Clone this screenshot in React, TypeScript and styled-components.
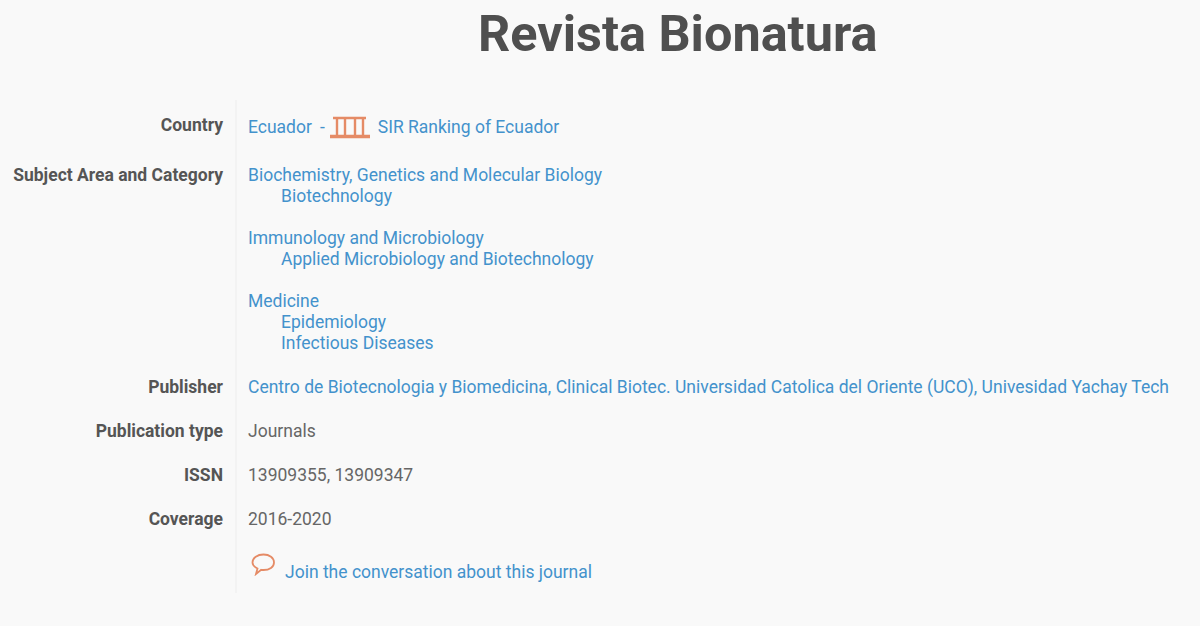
import React from 'react';
import styled, { createGlobalStyle } from 'styled-components';

const GlobalStyle = createGlobalStyle`
  html, body {
    margin: 0;
    padding: 0;
    background: #f9f9f9;
    overflow: hidden;
  }
`;

const Page = styled.div`
  width: 1200px;
  height: 626px;
  background: #f9f9f9;
  font-family: Roboto, sans-serif;
  font-size: 17.5px;
  line-height: 21px;
  color: #666;
`;

const Title = styled.h1`
  margin: 0;
  padding: 6px 0 0 478px;
  height: 95px;
  box-sizing: border-box;
  font-size: 50.4px;
  line-height: 56px;
  font-weight: 700;
  color: #4f4f4f;
`;

const InfoGrid = styled.div`
  display: grid;
  grid-template-columns: 235px 1fr;
  padding-top: 5px;
`;

const Label = styled.div<{ $top: number; $bottom: number }>`
  padding: ${p => p.$top}px 12px ${p => p.$bottom}px 0;
  text-align: right;
  font-weight: 700;
  color: #555;
`;

const Value = styled.div<{ $top: number; $bottom: number }>`
  padding: ${p => p.$top}px 0 ${p => p.$bottom}px 11px;
  border-left: 2px solid #f3f3f3;
  white-space: nowrap;
`;

const Link = styled.a`
  color: #4392cc;
  text-decoration: none;
`;

const SubLink = styled(Link)`
  display: block;
  padding-left: 33px;
`;

const Category = styled.div`
  margin-bottom: 21px;

  &:last-child {
    margin-bottom: 0;
  }
`;

const Dash = styled.span`
  color: #4392cc;
  margin: 0 5px 0 8px;
`;

const RankIcon = styled.svg`
  vertical-align: -6px;
  margin-right: 8px;
`;

const ChatIcon = styled.svg`
  vertical-align: 2px;
  margin: 0 8px 0 3px;
`;

const categories = [
  { name: 'Biochemistry, Genetics and Molecular Biology', subs: ['Biotechnology'] },
  { name: 'Immunology and Microbiology', subs: ['Applied Microbiology and Biotechnology'] },
  { name: 'Medicine', subs: ['Epidemiology', 'Infectious Diseases'] },
];

export default function App() {
  return (
    <Page>
      <GlobalStyle />
      <Title>Revista Bionatura</Title>
      <InfoGrid>
        <Label $top={15} $bottom={26}>Country</Label>
        <Value $top={15} $bottom={26}>
          <Link>Ecuador</Link>
          <Dash>-</Dash>
          <RankIcon width="40" height="24" viewBox="0 0 40 24" fill="none" stroke="#e58b66">
            <path d="M3 3h33" strokeWidth="2.4" />
            <path d="M7 3v18M15 3v18M25 3v18M33 3v18" strokeWidth="2.4" />
            <path d="M0 21.500h40" strokeWidth="3.4" />
          </RankIcon>
          <Link>SIR Ranking of Ecuador</Link>
        </Value>

        <Label $top={0} $bottom={12}>Subject Area and Category</Label>
        <Value $top={0} $bottom={12}>
          {categories.map(c => (
            <Category key={c.name}>
              <Link>{c.name}</Link>
              {c.subs.map(s => <SubLink key={s}>{s}</SubLink>)}
            </Category>
          ))}
        </Value>

        <Label $top={11} $bottom={12}>Publisher</Label>
        <Value $top={11} $bottom={12}>
          <Link>Centro de Biotecnologia y Biomedicina, Clinical Biotec. Universidad Catolica del Oriente (UCO), Univesidad Yachay Tech</Link>
        </Value>

        <Label $top={11} $bottom={12}>Publication type</Label>
        <Value $top={11} $bottom={12}>Journals</Value>

        <Label $top={11} $bottom={12}>ISSN</Label>
        <Value $top={11} $bottom={11}>13909355, 13909347</Value>

        <Label $top={11} $bottom={12}>Coverage</Label>
        <Value $top={11} $bottom={12}>2016-2020</Value>

        <Label $top={10} $bottom={10} />
        <Value $top={10} $bottom={10}>
          <ChatIcon width="26" height="24" viewBox="0 0 26 24" fill="none" stroke="#e58b66" strokeWidth="1.8">
            <path d="M12.500 2.500c6 0 10.500 3.400 10.500 8s-4.500 7.500-10.500 7.500c-.8 0-1.500 0-2.300-.2L5 22l1.500-5.500C3.500 15 1.500 13 1.500 10.500c0-4.600 5-8 11-8z" />
          </ChatIcon>
          <Link>Join the conversation about this journal</Link>
        </Value>
      </InfoGrid>
    </Page>
  );
}
